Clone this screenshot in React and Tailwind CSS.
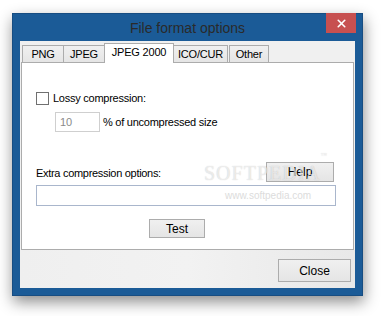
import { X } from 'lucide-react';

const tabs = [
  { label: 'PNG', cls: 'w-[42px]' },
  { label: 'JPEG', cls: 'w-[42px] -ml-px' },
  { label: 'JPEG 2000', cls: 'w-[70px] -ml-px', active: true },
  { label: 'ICO/CUR', cls: 'w-[55px] -ml-px' },
  { label: 'Other', cls: 'w-[40px] ml-[1px]' },
];

function Button({ children, className }) {
  return (
    <button
      className={`flex items-center justify-center border border-[#acacac] bg-gradient-to-b from-[#f0f0f0] to-[#e5e5e5] text-[12px] text-black ${className}`}
    >
      {children}
    </button>
  );
}

export default function App() {
  return (
    <div className="w-[383px] h-[316px] bg-white pl-[12px] pt-[13px] font-['Liberation_Sans',Arial,sans-serif] overflow-hidden">
      <div className="flex flex-col w-[351px] h-[283px] bg-[#1b5b97] border border-[#174d82] shadow-[1px_6px_14px_rgba(0,0,0,0.45)]">
        {/* title bar */}
        <div className="relative flex items-center justify-center h-[27px] shrink-0">
          <span className="text-[14px] text-[#2a2a2a] mt-[1px]">File format options</span>
          <div className="absolute right-[6px] -top-px w-[30px] h-[20px] bg-[#c75050] flex items-center justify-center">
            <X className="w-[13px] h-[13px] text-white" strokeWidth={3} />
          </div>
        </div>

        {/* client */}
        <div className="flex flex-col mx-[7px] h-[247px] bg-[#f0f0f0]">
          <div className="relative z-10 flex items-end h-[20px] mt-[2px] ml-[2px]">
            {tabs.map((t) =>
              t.active ? (
                <div
                  key={t.label}
                  className={`${t.cls} h-[20px] pb-[2px] flex items-center justify-center bg-white border border-b-0 border-[#acacac] text-[11px] tracking-[-0.2px] text-black`}
                >
                  {t.label}
                </div>
              ) : (
                <div
                  key={t.label}
                  className={`${t.cls} h-[17px] mb-[1px] flex items-center justify-center bg-gradient-to-b from-[#f0f0f0] to-[#e5e5e5] border border-b-0 border-[#acacac] text-[11px] tracking-[-0.2px] text-black`}
                >
                  {t.label}
                </div>
              )
            )}
          </div>

          {/* panel */}
          <div className="relative -mt-px ml-[1px] w-[333px] h-[188px] bg-white border border-[#acacac] pl-[14px] pt-[29px]">
            <div className="flex items-center h-[13px]">
              <div className="w-[13px] h-[13px] border border-[#707070] bg-white" />
              <span className="ml-[4px] text-[11px] tracking-[-0.25px] text-black">Lossy compression:</span>
            </div>
            <div className="flex items-center mt-[7px] ml-[19px]">
              <div className="w-[45px] h-[20px] border border-[#cfcfcf] flex items-center pl-[4px] text-[11px] text-[#8a8a8a]">
                10
              </div>
              <span className="ml-[3px] text-[11px] tracking-[-0.25px] text-black">% of uncompressed size</span>
            </div>

            <div className="flex items-center justify-between w-[300px] mt-[30px]">
              <span className="mt-[3px] text-[11px] tracking-[-0.3px] text-black">Extra compression options:</span>
              <Button className="w-[68px] h-[20px] mr-[2px]">Help</Button>
            </div>
            <div className="w-[300px] h-[21px] mt-[3px] border border-[#a9b6cc] bg-white" />
            <Button className="w-[56px] h-[19px] mt-[13px] ml-[113px]">Test</Button>

            {/* watermark */}
            <div className="absolute left-[182px] top-[95px] pointer-events-none text-[20px] tracking-[1px] text-[rgba(255,255,255,0.6)] [text-shadow:0_0_1px_rgba(0,0,0,0.22)] font-['Liberation_Serif',serif]">
              SOFTPEDIA<sup className="text-[6px] tracking-normal align-top">™</sup>
            </div>
            <div className="absolute left-[203px] top-[125px] pointer-events-none text-[10px] text-[#dcdcdc]">
              www.softpedia.com
            </div>
          </div>

          {/* bottom area */}
          <div className="flex-1 flex items-start justify-end pt-[9px] pr-[4px] bg-gradient-to-r from-[#efefef] via-[#f2f2f2] to-[#e8e8e8]">
            <Button className="w-[73px] h-[23px] border-[#3c99f0]">Close</Button>
          </div>
        </div>
      </div>
    </div>
  );
}
